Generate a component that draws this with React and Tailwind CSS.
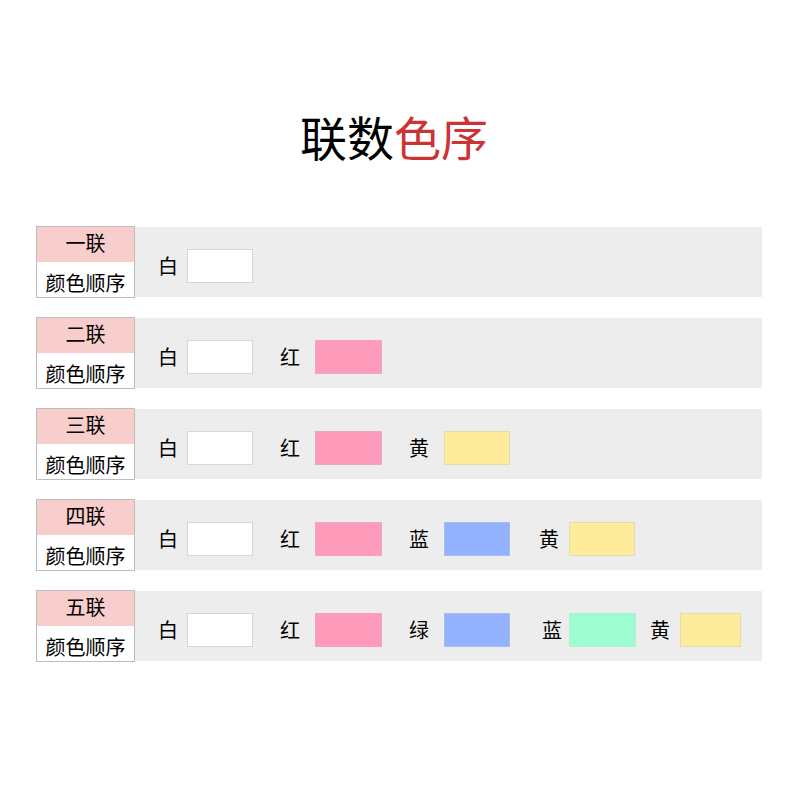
import React from 'react';

const colors = {
  white: 'bg-white border-[#d6d6d6]',
  red: 'bg-[#fe9aba] border-[#f0a6be]',
  blue: 'bg-[#93b1fd] border-[#a3bdf5]',
  green: 'bg-[#9dfcd0] border-[#b6ecd2]',
  yellow: 'bg-[#feec9c] border-[#e6dca6]',
};

const rows = [
  {
    name: '一联',
    items: [{ label: '白', color: 'white', ml: 'ml-[23px]', gap: 'ml-[9px]', w: 'w-[66px]' }],
  },
  {
    name: '二联',
    items: [
      { label: '白', color: 'white', ml: 'ml-[23px]', gap: 'ml-[9px]', w: 'w-[66px]' },
      { label: '红', color: 'red', ml: 'ml-[27px]', gap: 'ml-[15px]', w: 'w-[67px]' },
    ],
  },
  {
    name: '三联',
    items: [
      { label: '白', color: 'white', ml: 'ml-[23px]', gap: 'ml-[9px]', w: 'w-[66px]' },
      { label: '红', color: 'red', ml: 'ml-[27px]', gap: 'ml-[15px]', w: 'w-[67px]' },
      { label: '黄', color: 'yellow', ml: 'ml-[27px]', gap: 'ml-[15px]', w: 'w-[66px]' },
    ],
  },
  {
    name: '四联',
    items: [
      { label: '白', color: 'white', ml: 'ml-[23px]', gap: 'ml-[9px]', w: 'w-[66px]' },
      { label: '红', color: 'red', ml: 'ml-[27px]', gap: 'ml-[15px]', w: 'w-[67px]' },
      { label: '蓝', color: 'blue', ml: 'ml-[27px]', gap: 'ml-[15px]', w: 'w-[66px]' },
      { label: '黄', color: 'yellow', ml: 'ml-[29px]', gap: 'ml-[10px]', w: 'w-[66px]' },
    ],
  },
  {
    name: '五联',
    items: [
      { label: '白', color: 'white', ml: 'ml-[23px]', gap: 'ml-[9px]', w: 'w-[66px]' },
      { label: '红', color: 'red', ml: 'ml-[27px]', gap: 'ml-[15px]', w: 'w-[67px]' },
      { label: '绿', color: 'blue', ml: 'ml-[27px]', gap: 'ml-[15px]', w: 'w-[66px]' },
      { label: '蓝', color: 'green', ml: 'ml-[32px]', gap: 'ml-[7px]', w: 'w-[67px]' },
      { label: '黄', color: 'yellow', ml: 'ml-[14px]', gap: 'ml-[10px]', w: 'w-[61px]' },
    ],
  },
];

const App = () => {
  return (
    <main
      className="min-h-screen bg-white text-black"
      style={{ fontFamily: '"Noto Sans CJK SC", "Noto Sans", sans-serif' }}
    >
      <div className="pt-[112px]">
        {/* 标题 */}
        <h1 className="text-center text-[47px] leading-none font-normal pr-[12px]">
          联数<span className="text-[#cc3333]">色序</span>
        </h1>

        {/* 各联 */}
        <div className="mt-[67px] ml-[36px] w-[726px] flex flex-col gap-[19px]">
          {rows.map((row) => (
            <div key={row.name} className="flex h-[72px]">
              <div className="w-[99px] shrink-0 flex flex-col border border-[#bdbdbd]">
                <div className="h-[35px] bg-[#f8cecc] flex items-center justify-center text-[20px] leading-none pb-[3px]">
                  {row.name}
                </div>
                <div className="flex-1 bg-white flex items-center justify-center text-[20px] leading-none pt-[6px]">
                  颜色顺序
                </div>
              </div>
              <div className="flex-1 my-[1px] bg-[#ededed] flex items-center pt-[8px]">
                {row.items.map((it, i) => (
                  <div key={i} className={`flex items-center ${it.ml}`}>
                    <span className="text-[20px] leading-none w-[20px]">{it.label}</span>
                    <div className={`${it.gap} ${it.w} h-[34px] border ${colors[it.color]}`} />
                  </div>
                ))}
              </div>
            </div>
          ))}
        </div>
      </div>
    </main>
  );
};

export default App;
